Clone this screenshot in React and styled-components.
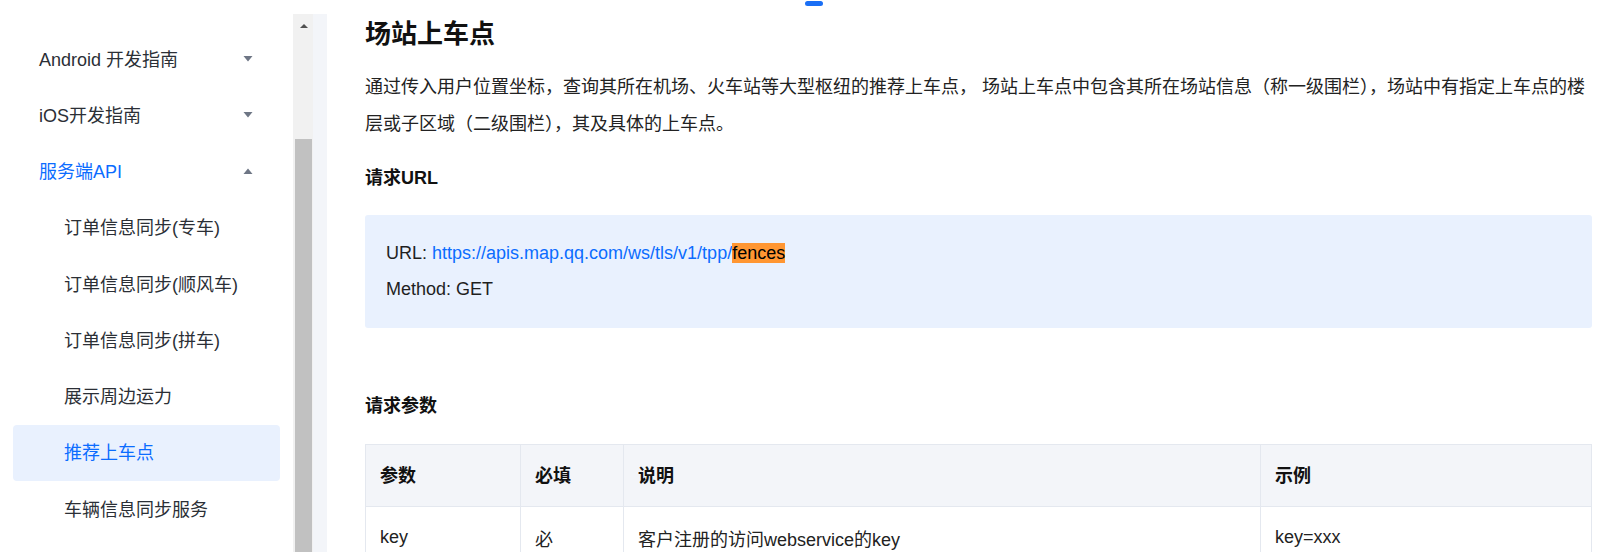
import React from "react";
import styled, { createGlobalStyle } from "styled-components";

const GlobalStyle = createGlobalStyle`
  html, body {
    margin: 0;
    padding: 0;
    background: #ffffff;
  }
  body {
    font-family: "Liberation Sans", "Noto Sans CJK SC", Arial, sans-serif;
    color: #1f2329;
  }
`;

const navItems = [
  { label: "Android 开发指南", level: 0, arrow: "down" },
  { label: "iOS开发指南", level: 0, arrow: "down" },
  { label: "服务端API", level: 0, arrow: "up", open: true },
  { label: "订单信息同步(专车)", level: 1 },
  { label: "订单信息同步(顺风车)", level: 1 },
  { label: "订单信息同步(拼车)", level: 1 },
  { label: "展示周边运力", level: 1 },
  { label: "推荐上车点", level: 1, active: true },
  { label: "车辆信息同步服务", level: 1 },
];

const params = [
  { name: "key", required: "必", desc: "客户注册的访问webservice的key", example: "key=xxx" },
];

const Caret = ({ dir }) => (
  <CaretSvg width="10" height="6" viewBox="0 0 10 6">
    {dir === "up" ? (
      <polygon points="0.5,6 9.5,6 5,0.5" fill="currentColor" />
    ) : (
      <polygon points="0.5,0 9.5,0 5,5.5" fill="currentColor" />
    )}
  </CaretSvg>
);

const App = () => {
  return (
    <>
      <GlobalStyle />
      <Page>
        <Sidebar>
          {navItems.map((item) => (
            <NavItem key={item.label} $level={item.level} $active={item.active} $open={item.open}>
              <span>{item.label}</span>
              {item.arrow && <Caret dir={item.arrow} />}
            </NavItem>
          ))}
        </Sidebar>

        <ScrollColumn>
          <ScrollTrack>
            <ScrollButton>
              <svg width="8" height="4" viewBox="0 0 8 4">
                <polygon points="0,4 8,4 4,0" fill="#505050" />
              </svg>
            </ScrollButton>
            <ScrollThumb />
          </ScrollTrack>
        </ScrollColumn>

        <Gutter>
          <GutterFill />
        </Gutter>

        <Main>
          <Handle />
          <Title>场站上车点</Title>
          <Intro>
            通过传入用户位置坐标，查询其所在机场、火车站等大型枢纽的推荐上车点， 场站上车点中包含其所在场站信息（称一级围栏），场站中有指定上车点的楼层或子区域（二级围栏），其及具体的上车点。
          </Intro>

          <SectionTitle $top={21}>请求URL</SectionTitle>
          <CodeBox>
            <CodeLine>
              URL: <Link>https://apis.map.qq.com/ws/tls/v1/tpp/</Link>
              <Mark>fences</Mark>
            </CodeLine>
            <CodeLine>Method: GET</CodeLine>
          </CodeBox>

          <SectionTitle $top={64}>请求参数</SectionTitle>
          <Table>
            <colgroup>
              <col style={{ width: 155 }} />
              <col style={{ width: 103 }} />
              <col style={{ width: 637 }} />
              <col />
            </colgroup>
            <thead>
              <tr>
                <Th>参数</Th>
                <Th>必填</Th>
                <Th>说明</Th>
                <Th>示例</Th>
              </tr>
            </thead>
            <tbody>
              {params.map((p) => (
                <tr key={p.name}>
                  <Td>{p.name}</Td>
                  <Td>{p.required}</Td>
                  <Td>{p.desc}</Td>
                  <Td>{p.example}</Td>
                </tr>
              ))}
            </tbody>
          </Table>
        </Main>
      </Page>
    </>
  );
};

const Page = styled.div`
  display: flex;
  width: 1612px;
  height: 552px;
  overflow: hidden;
  background: #ffffff;
`;

const Sidebar = styled.nav`
  width: 293px;
  flex-shrink: 0;
  padding-top: 31px;
  box-sizing: border-box;
  display: flex;
  flex-direction: column;
  background: #ffffff;
`;

const NavItem = styled.div`
  display: flex;
  align-items: center;
  justify-content: space-between;
  height: 56.25px;
  box-sizing: border-box;
  flex-shrink: 0;
  margin: 0 13px;
  padding: 0 27px 3px ${(p) => (p.$level ? 51 : 26)}px;
  border-radius: 4px;
  font-size: 18px;
  color: ${(p) => (p.$active || p.$open ? "#0b6cff" : "#2b2f36")};
  background: ${(p) => (p.$active ? "#e9f1fe" : "transparent")};
  white-space: nowrap;
`;

const CaretSvg = styled.svg`
  color: #6e7685;
  flex-shrink: 0;
  margin-top: 2px;
`;

const ScrollColumn = styled.div`
  width: 20px;
  flex-shrink: 0;
  padding-top: 14px;
  display: flex;
  flex-direction: column;
`;

const ScrollTrack = styled.div`
  flex: 1;
  background: #f1f1f1;
  display: flex;
  flex-direction: column;
`;

const ScrollButton = styled.div`
  height: 24px;
  display: flex;
  align-items: center;
  justify-content: center;
  padding-left: 1px;
`;

const ScrollThumb = styled.div`
  margin: 101px 1px 0 2px;
  flex: 1;
  background: #c1c1c1;
`;

const Gutter = styled.div`
  width: 14px;
  flex-shrink: 0;
  padding-top: 14px;
  display: flex;
  flex-direction: column;
`;

const GutterFill = styled.div`
  flex: 1;
  background: #f3f5f9;
`;

const Main = styled.main`
  position: relative;
  flex: 1;
  min-width: 0;
  padding: 16px 20px 0 38px;
  color: #1d2129;
`;

const Handle = styled.div`
  position: absolute;
  top: 1px;
  left: 478px;
  width: 18px;
  height: 5px;
  border-radius: 3px;
  background: #1a6ff5;
`;

const Title = styled.h1`
  margin: 0;
  font-size: 26px;
  line-height: 36px;
  font-weight: 700;
  color: #111111;
`;

const Intro = styled.p`
  margin: 17px 0 0;
  font-size: 18px;
  line-height: 37px;
  color: #222222;
`;

const SectionTitle = styled.h3`
  margin: ${(p) => p.$top}px 0 0;
  font-size: 18px;
  line-height: 28px;
  font-weight: 700;
  color: #111111;
`;

const CodeBox = styled.div`
  margin-top: 23px;
  height: 113px;
  box-sizing: border-box;
  padding: 20px 21px 0;
  border-radius: 3px;
  background: #e9f1fe;
`;

const CodeLine = styled.div`
  font-size: 18px;
  line-height: 36px;
  color: #1f1f1f;
  white-space: nowrap;
`;

const Link = styled.span`
  color: #0b6cff;
`;

const Mark = styled.mark`
  background: #ff9632;
  color: #000000;
`;

const Table = styled.table`
  margin-top: 24px;
  width: 100%;
  table-layout: fixed;
  border-collapse: collapse;
  font-size: 18px;
`;

const Th = styled.th`
  height: 58px;
  padding: 0 14px 3px;
  text-align: left;
  font-weight: 700;
  color: #111111;
  background: #f3f5f9;
  border: 1px solid #e4e8ef;
`;

const Td = styled.td`
  height: 61px;
  padding: 0 14px;
  color: #222222;
  border: 1px solid #e4e8ef;
`;

export default App;
